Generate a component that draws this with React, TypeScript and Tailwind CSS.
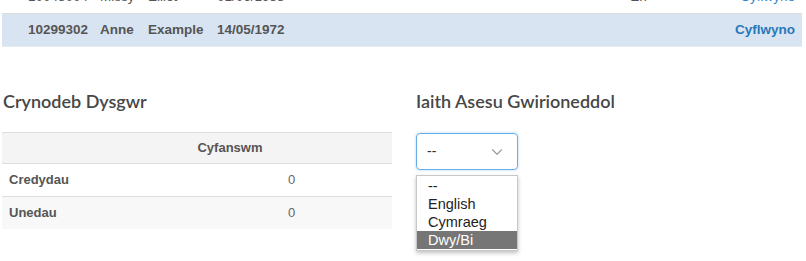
import { ChevronDown } from 'lucide-react';

const students = [
  { id: '10048004', first: 'Missy', last: 'Elliot', dob: '01/06/1988', lang: 'En', active: false },
  { id: '10299302', first: 'Anne', last: 'Example', dob: '14/05/1972', lang: '', active: true },
];

const options = ['--', 'English', 'Cymraeg', 'Dwy/Bi'];

const App = () => {
  return (
    <div className="w-[806px] h-[261px] overflow-hidden bg-white font-['Liberation_Sans',Arial,sans-serif] text-[#555]">
      {/* student rows */}
      <div className="mx-[2px] w-[800px] -mt-[18px]">
        {students.map(s => (
          <div
            key={s.id}
            className={
              s.active
                ? 'flex items-center h-[33px] pl-[26px] pr-[7px] bg-[#d8e4f2] border-b border-[#e6ebf1] text-[13.5px] font-bold'
                : 'flex items-center h-[32px] pl-[26px] pr-[7px] border-b border-[#dcdcdc] text-[13.5px]'
            }
          >
            <span className="w-[72px]">{s.id}</span>
            <span className="w-[48px]">{s.first}</span>
            <span className="w-[69px]">{s.last}</span>
            <span className="flex-1">{s.dob}</span>
            <span className="w-[110px]">{s.lang}</span>
            <span className={s.active ? 'text-[#2a78b8] font-bold' : 'text-[#3a87c8]'}>Cyflwyno</span>
          </div>
        ))}
      </div>

      <div className="flex mt-[43px]">
        {/* summary */}
        <div className="w-[390px] ml-[2px]">
          <h2 className="pl-[1px] font-['Lato',sans-serif] font-semibold text-[18px] leading-[22px] text-[#474747]">
            Crynodeb Dysgwr
          </h2>
          <div className="mt-[20px] border-t border-[#dcdcdc] text-[13px]">
            <div className="flex items-center h-[31px] bg-[#f5f4f4] border-b border-[#dcdcdc] font-bold">
              <span className="w-[66px]" />
              <span className="flex-1 text-center">Cyfanswm</span>
            </div>
            <div className="flex items-center h-[33px] border-b border-[#dcdcdc]">
              <span className="w-[66px] pl-[7px] whitespace-nowrap font-bold">Credydau</span>
              <span className="flex-1 pl-[220px] text-[#666]">0</span>
            </div>
            <div className="flex items-center h-[32px] bg-[#f8f8f8]">
              <span className="w-[66px] pl-[7px] whitespace-nowrap font-bold">Unedau</span>
              <span className="flex-1 pl-[220px] text-[#666]">0</span>
            </div>
          </div>
        </div>

        {/* assessment language */}
        <div className="ml-[24px]">
          <h2 className="font-['Lato',sans-serif] font-semibold text-[18px] leading-[22px] text-[#474747]">
            Iaith Asesu Gwirioneddol
          </h2>
          <div className="relative mt-[21px] w-[102px]">
            <div className="flex items-center justify-between h-[37px] pl-[10px] pr-[11px] border border-[#66afe9] rounded-[4px] shadow-[0_0_3px_rgba(102,175,233,0.5)] text-[14px] text-[#333]">
              <span>--</span>
              <ChevronDown size={18} strokeWidth={1.5} className="text-[#999]" />
            </div>
            <div className="absolute left-0 top-[42px] w-[102px] bg-white border border-[#c8c8c8] shadow-[0_2px_4px_rgba(0,0,0,0.25)] py-[1px] text-[14.5px] leading-[18px] text-[#222]">
              {options.map(o => (
                <div
                  key={o}
                  className={o === 'Dwy/Bi' ? 'pl-[11px] bg-[#767676] text-white' : 'pl-[11px]'}
                >
                  {o}
                </div>
              ))}
            </div>
          </div>
        </div>
      </div>
    </div>
  );
};

export default App;
